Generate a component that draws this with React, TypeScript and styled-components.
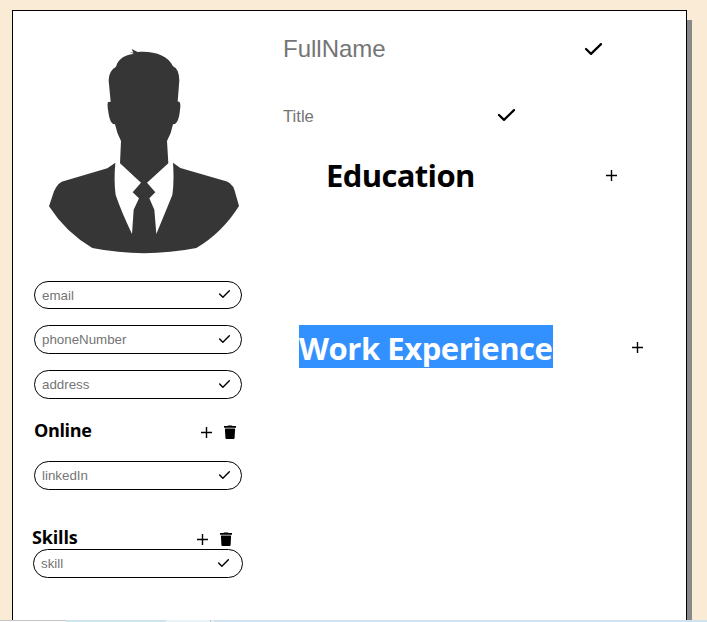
import React from "react";
import styled, { createGlobalStyle } from "styled-components";

const GlobalStyle = createGlobalStyle`
  * { box-sizing: border-box; }
  body { margin: 0; background: #faebd7; overflow: hidden; }
`;

const Page = styled.div`
  display: flex;
  flex-direction: column;
  width: 707px;
  height: 622px;
  font-family: "Open Sans", "Noto Sans", sans-serif;
  color: #000;
`;

const Desk = styled.main`
  height: 620px;
  padding: 10px 20px 0 12px;
  overflow: hidden;
`;

const Sheet = styled.article`
  display: grid;
  grid-template-columns: 270px 1fr;
  height: 700px;
  border: 1px solid #000;
  background: #fff;
  box-shadow: 5px 10px #888;
`;

const Sidebar = styled.aside`
  padding: 29px 0 0 21px;
`;

const Portrait = styled.svg`
  display: block;
  width: 210px;
  height: 220px;
  margin-left: 6px;
`;

const Pill = styled.div<{ $top: number; $tall?: number; $wide?: boolean }>`
  display: flex;
  align-items: center;
  justify-content: space-between;
  width: ${(p) => (p.$wide ? 210 : 208)}px;
  height: ${(p) => p.$tall ?? 29}px;
  margin-top: ${(p) => p.$top}px;
  margin-left: ${(p) => (p.$wide ? -1 : 0)}px;
  padding: 0 ${(p) => (p.$wide ? 13 : 11)}px 0 7px;
  border: 1px solid #000;
  border-radius: 15px;

  > svg {
    margin-bottom: 2px;
  }
`;

const Placeholder = styled.span<{ $size: number; $down?: number }>`
  padding-top: ${(p) => p.$down ?? 0}px;
  font-family: "Liberation Sans", Arial, sans-serif;
  font-size: ${(p) => p.$size}px;
  line-height: 1.15;
  color: #757575;
`;

const SideHeader = styled.header<{ $top: number; $height: number; $shift?: number; $right: number }>`
  display: flex;
  align-items: center;
  width: 208px;
  height: ${(p) => p.$height}px;
  margin-top: ${(p) => p.$top}px;
  padding-right: ${(p) => p.$right}px;
  margin-left: ${(p) => p.$shift ?? 0}px;
`;

const SideTitle = styled.h3<{ $spacing: number }>`
  flex: 1;
  margin: 0;
  font-size: 18px;
  line-height: 24px;
  font-weight: 700;
  letter-spacing: ${(p) => p.$spacing}px;
`;

const Actions = styled.div`
  display: flex;
  align-items: center;
  gap: 12px;
  padding-top: 4px;
`;

const Icon = styled.svg`
  display: block;
  flex: none;
  overflow: visible;
`;

const Main = styled.section`
  display: flex;
  flex-direction: column;
`;

const Field = styled.div<{ $width: number; $height: number; $top: number }>`
  display: flex;
  align-items: center;
  justify-content: space-between;
  width: ${(p) => p.$width}px;
  height: ${(p) => p.$height}px;
  margin-top: ${(p) => p.$top}px;
`;

const SectionRow = styled.header<{ $top: number; $left: number; $width: number; $drop?: number }>`
  display: flex;
  align-items: center;
  justify-content: space-between;
  width: ${(p) => p.$width}px;
  height: 43px;
  margin: ${(p) => p.$top}px 0 0 ${(p) => p.$left}px;

  > svg {
    margin-top: ${(p) => p.$drop ?? 0}px;
  }
`;

const SectionTitle = styled.h1<{ $spacing: number; $selected?: boolean }>`
  margin: 0;
  padding-top: ${(p) => (p.$selected ? 2 : 0)}px;
  height: 43px;
  width: ${(p) => (p.$selected ? "254px" : "auto")};
  font-size: 31px;
  line-height: 43px;
  font-weight: 700;
  letter-spacing: ${(p) => p.$spacing}px;
  white-space: nowrap;
  color: ${(p) => (p.$selected ? "#fff" : "#000")};
  background: ${(p) => (p.$selected ? "#3390ff" : "transparent")};
`;

const Taskbar = styled.footer`
  display: grid;
  grid-template-columns: 66px 100px 44px 1px 3px 1fr;
  height: 2px;
`;

const Segment = styled.span<{ $color: string; $line?: boolean }>`
  background: ${(p) => p.$color};
  border-top: ${(p) => (p.$line ? "1px solid #c4c4c4" : "0")};
`;

const Check = ({ large }: { large?: boolean }) => (
  <Icon width={large ? 17 : 11} height={large ? 12 : 8} viewBox="0 0 17 12">
    <path d="M1 6 6 10.9 16 1.1" fill="none" stroke="#000" strokeWidth="2.2" strokeLinejoin="round" strokeLinecap="round" />
  </Icon>
);

const Plus = () => (
  <Icon width="11" height="11" viewBox="0 0 11 11">
    <path d="M5.5 0v11M0 5.5h11" stroke="#000" strokeWidth="1.4" />
  </Icon>
);

const Trash = () => (
  <Icon width="12" height="14" viewBox="0 0 12 14">
    <path d="M0 1h3.4l.7-.5h3.8l.7.5H12v1.8H0zM.9 3.4h10.2l-.5 9.5q-.1 1.1-1.1 1.1h-7q-1 0-1.1-1.1z" />
  </Icon>
);

const Silhouette = () => (
  <Portrait viewBox="0 0 630 660" fill="#363636">
    <path d="M240 370 243 303Q231 282 225 253C213 254 207 232 205 215Q200 188 205 186L212 185 206 122Q206 92 228 80C236 53 258 44 282 42L269 37 280 38 275 27 293 36C342 32 385 47 399 79Q417 86 418 121L413 185Q424 183 420 209C418 232 412 254 399 253Q394 281 381 303L385 370 321 428 346 457 328 475 343 509 349 582 397 465Q403 425 399 368L421 384 548 421Q576 425 584 452L597 498Q547 578 469 624Q312 655 157 624Q78 578 27 499L42 454Q54 425 75 422L202 385 226 368Q221 425 227 465Q244 515 276 582L281 509 297 475 278 457 303 428Z" />
  </Portrait>
);

export default function App() {
  return (
    <>
      <GlobalStyle />
      <Page>
        <Desk>
          <Sheet>
            <Sidebar>
              <Silhouette />
              <Pill $top={21} $tall={28}>
                <Placeholder $size={13.333} $down={2}>email</Placeholder>
                <Check />
              </Pill>
              <Pill $top={16}>
                <Placeholder $size={13.333}>phoneNumber</Placeholder>
                <Check />
              </Pill>
              <Pill $top={16}>
                <Placeholder $size={13.333}>address</Placeholder>
                <Check />
              </Pill>
              <SideHeader $top={19} $height={24} $right={6}>
                <SideTitle $spacing={-0.35}>Online</SideTitle>
                <Actions><Plus /><Trash /></Actions>
              </SideHeader>
              <Pill $top={19}>
                <Placeholder $size={13.333}>linkedIn</Placeholder>
                <Check />
              </Pill>
              <SideHeader $top={35} $height={24} $shift={-2} $right={8}>
                <SideTitle $spacing={-0.15}>Skills</SideTitle>
                <Actions><Plus /><Trash /></Actions>
              </SideHeader>
              <Pill $top={0} $wide>
                <Placeholder $size={13.333}>skill</Placeholder>
                <Check />
              </Pill>
            </Sidebar>
            <Main>
              <Field $width={319} $height={40} $top={18}>
                <Placeholder $size={24}>FullName</Placeholder>
                <Check large />
              </Field>
              <Field $width={232} $height={30} $top={31}>
                <Placeholder $size={16.7} $down={3}>Title</Placeholder>
                <Check large />
              </Field>
              <SectionRow $top={24} $left={43} $width={291}>
                <SectionTitle $spacing={-0.65}>Education</SectionTitle>
                <Plus />
              </SectionRow>
              <SectionRow $top={128} $left={16} $width={344} $drop={2}>
                <SectionTitle $spacing={-0.45} $selected>Work Experience</SectionTitle>
                <Plus />
              </SectionRow>
            </Main>
          </Sheet>
        </Desk>
        <Taskbar>
          <Segment $color="#fff" $line />
          <Segment $color="#d0e4ee" />
          <Segment $color="#e8f4f8" />
          <Segment $color="#b9c9d3" />
          <Segment $color="#e2eff5" />
          <Segment $color="#d0e2ee" />
        </Taskbar>
      </Page>
    </>
  );
}
